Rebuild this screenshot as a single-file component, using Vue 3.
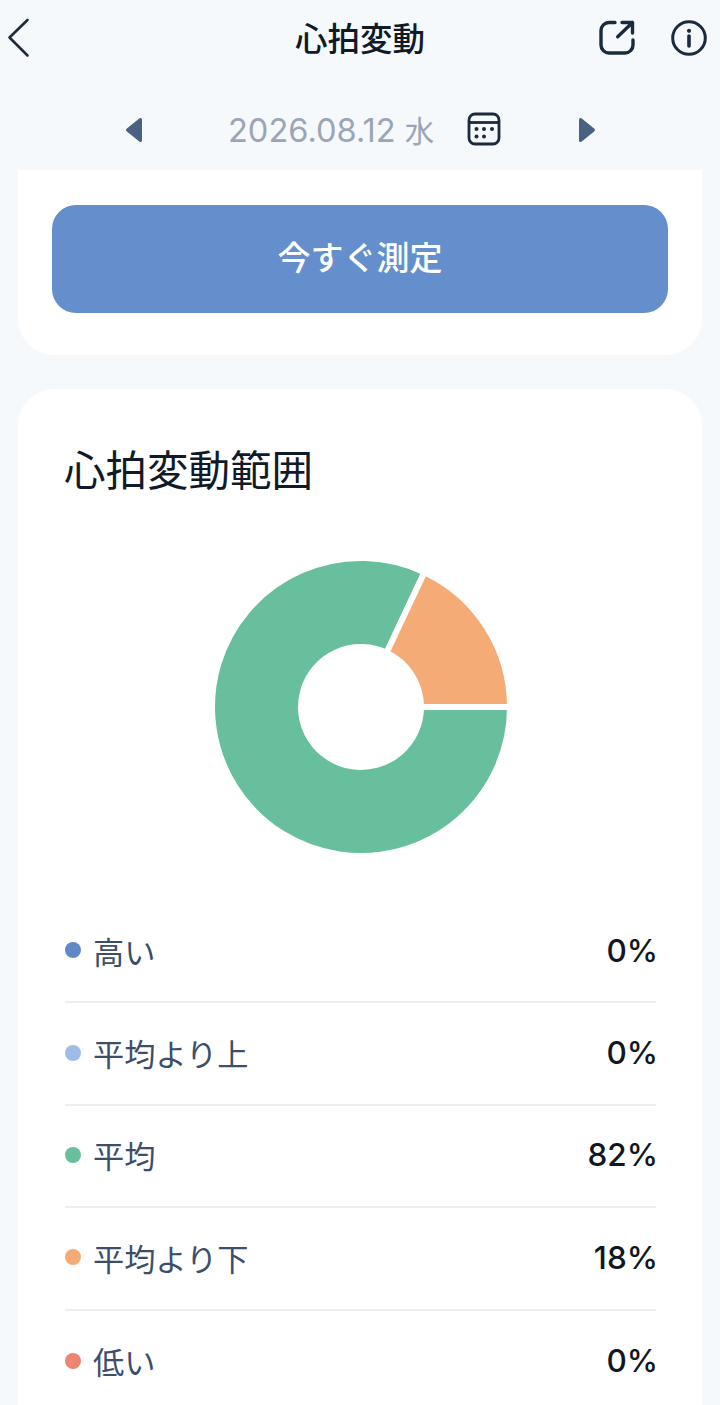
<template>
  <div class="page">
    <header class="nav">
      <button class="nav-back" aria-label="back">
        <svg width="24" height="40" viewBox="0 0 24 40" fill="none" stroke="#1c2a3e" stroke-width="2.6" stroke-linecap="round" stroke-linejoin="round">
          <path d="M20.5 2 2.5 19.5 20.5 37.5" />
        </svg>
      </button>
      <h1 class="nav-title">心拍変動</h1>
      <div class="nav-actions">
        <svg width="36" height="36" viewBox="0 0 36 36" fill="none" stroke="#1c2a3e" stroke-width="3.4" stroke-linecap="round" stroke-linejoin="round">
          <path d="M16 2.5H10a8 8 0 0 0-8 8V25a8 8 0 0 0 8 8h16a8 8 0 0 0 8-8v-5" />
          <path d="M18.7 16.7 33.5 2.5M23 2.5H33.5V13" />
        </svg>
        <svg width="36" height="36" viewBox="0 0 36 36" fill="none" stroke="#1c2a3e" stroke-width="3">
          <circle cx="18" cy="18" r="16.3" />
          <circle cx="18" cy="10.8" r="2.1" fill="#1c2a3e" stroke="none" />
          <path d="M18 16v10" stroke-width="3.6" stroke-linecap="round" />
        </svg>
      </div>
    </header>

    <div class="date-row">
      <svg class="arrow" width="18" height="26" viewBox="0 0 18 26"><path d="M15.5 2.5 2.5 13l13 10.5z" fill="#4a6282" stroke="#4a6282" stroke-width="3" stroke-linejoin="round" /></svg>
      <span class="date">2026.08.12 <span class="weekday">水</span></span>
      <svg class="calendar" width="34" height="34" viewBox="0 0 34 34" fill="none" stroke="#1c2a3e" stroke-width="2.8">
        <rect x="2" y="2" width="30" height="30" rx="6" />
        <path d="M2 10.5h30" />
        <g fill="#1c2a3e" stroke="none">
          <circle cx="9.5" cy="17" r="2" /><circle cx="17" cy="17" r="2" /><circle cx="25" cy="17" r="2" />
          <circle cx="9.5" cy="24.5" r="2" /><circle cx="17" cy="24.5" r="2" />
        </g>
      </svg>
      <svg class="arrow next" width="18" height="26" viewBox="0 0 18 26"><path d="M2.5 2.5 15.5 13 2.5 23.5z" fill="#4a6282" stroke="#4a6282" stroke-width="3" stroke-linejoin="round" /></svg>
    </div>

    <section class="card card-top">
      <button class="measure">今すぐ測定</button>
    </section>

    <section class="card card-range">
      <h2 class="range-title">心拍変動範囲</h2>
      <div class="donut">
        <svg width="300" height="300" viewBox="0 0 300 300">
          <path v-for="s in slices" :key="s.label" :d="s.d" :fill="s.color" stroke="#fff" stroke-width="6" />
        </svg>
      </div>
      <ul class="legend">
        <li v-for="row in rows" :key="row.label" class="legend-row">
          <span class="dot" :style="{ background: row.color }"></span>
          <span class="legend-label">{{ row.label }}</span>
          <span class="legend-value">{{ row.value }}%</span>
        </li>
      </ul>
    </section>
  </div>
</template>

<script setup>
import { computed } from 'vue'

const rows = [
  { label: '高い', value: 0, color: '#5f88c9' },
  { label: '平均より上', value: 0, color: '#9dbde6' },
  { label: '平均', value: 82, color: '#67bf9d' },
  { label: '平均より下', value: 18, color: '#f4ab75' },
  { label: '低い', value: 0, color: '#ee8472' },
]

const arc = (from, to) => {
  const c = 150
  const R = 149
  const r = 60
  const pt = (rad, deg) => {
    const a = (deg * Math.PI) / 180
    return `${(c + rad * Math.cos(a)).toFixed(2)} ${(c + rad * Math.sin(a)).toFixed(2)}`
  }
  const large = to - from > 180 ? 1 : 0
  return `M${pt(R, from)}A${R} ${R} 0 ${large} 1 ${pt(R, to)}L${pt(r, to)}A${r} ${r} 0 ${large} 0 ${pt(r, from)}Z`
}

// slices run clockwise from 3 o'clock, green first
const slices = computed(() => {
  let start = 0
  return rows
    .filter((row) => row.value > 0)
    .map((row) => {
      const end = start + (row.value / 100) * 360
      const d = arc(start, end)
      start = end
      return { ...row, d }
    })
})
</script>

<style>
html,
body {
  margin: 0;
  background: #f6f9fc;
}
</style>

<style scoped>
* {
  box-sizing: border-box;
}

.page {
  width: 720px;
  height: 1405px;
  overflow: hidden;
  background: #f6f9fc;
  font-family: Inter, "Noto Sans CJK JP", sans-serif;
}

.nav {
  display: grid;
  grid-template-columns: 1fr auto 1fr;
  align-items: center;
  height: 76px;
  padding: 0 13px 0 13px;
}

.nav-back {
  display: flex;
  margin-left: -6px;
  padding: 0;
  border: none;
  background: none;
}

.nav-title {
  margin: -4px 0 0;
  font-size: 32.5px;
  font-weight: 450;
  color: #101a28;
}

.nav-actions {
  display: flex;
  justify-content: flex-end;
  gap: 36px;
}

.date-row {
  display: flex;
  align-items: center;
  height: 94px;
  padding: 14px 0 0 125px;
}

.date {
  width: 206px;
  margin: -2px 0 0 85px;
  font-size: 32.6px;
  color: #9aa6b6;
  white-space: nowrap;
}

.weekday {
  font-size: 29.5px;
}

.calendar {
  margin: -2px 0 0 33px;
}

.arrow.next {
  margin-left: 77px;
}

.card {
  margin: 0 18px;
  background: #fff;
}

.card-top {
  padding: 35px 34px 42px;
  border-radius: 0 0 36px 36px;
}

.measure {
  display: block;
  width: 100%;
  height: 108px;
  padding: 0 0 6px;
  border: none;
  border-radius: 24px;
  background: #648fcc;
  color: #fff;
  font-family: inherit;
  font-size: 33px;
  font-weight: 450;
}

.card-range {
  margin-top: 34px;
  padding: 57px 46px 0 47px;
  border-radius: 36px 36px 0 0;
  height: 1100px;
}

.range-title {
  margin: 0 0 0 -1px;
  font-size: 41.5px;
  font-weight: 400;
  line-height: 50px;
  color: #101a28;
}

.donut {
  display: flex;
  justify-content: center;
  margin-top: 61px;
  padding-left: 1px;
}

.donut svg {
  display: block;
}

.legend {
  margin: 44px 0 0;
  padding: 0;
  list-style: none;
}

.legend-row {
  display: flex;
  align-items: center;
  height: 102.4px;
  padding-bottom: 2px;
  border-bottom: 2px solid #ebeef2;
}

.legend-row:last-child {
  border-bottom: none;
}

.dot {
  width: 16px;
  height: 16px;
  border-radius: 50%;
}

.legend-label {
  margin-left: 12px;
  font-size: 31.2px;
  color: #3c4e69;
}

.legend-value {
  margin: 0 -2px 0 auto;
  font-size: 31.5px;
  font-weight: 550;
  color: #0f1722;
}
</style>
